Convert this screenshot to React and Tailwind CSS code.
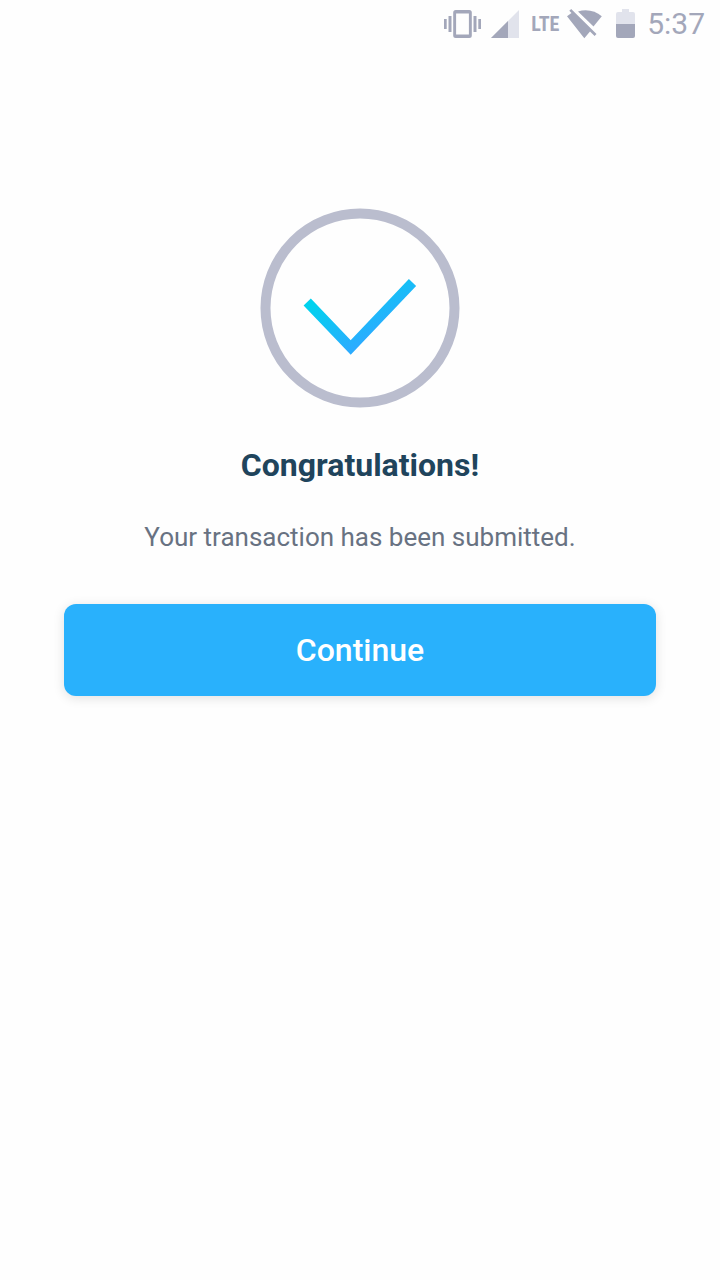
function VibrateIcon() {
  return (
    <svg aria-hidden="true" className="h-7 w-[38px]" viewBox="0 0 38 28" fill="#a3a7ba">
      <path d="M0 9h2.700v10H0zM4.500 6h3v16h-3zM29.500 6h3v16h-3zM34.300 9H37v10h-2.700z" />
      <path
        fillRule="evenodd"
        d="M11.700 0h13.600a2.500 2.500 0 0 1 2.500 2.500v23a2.500 2.500 0 0 1-2.500 2.500H11.700a2.500 2.500 0 0 1-2.500-2.500v-23A2.500 2.500 0 0 1 11.700 0zm.4 3.500v21h12.800v-21z"
      />
    </svg>
  );
}

function SignalIcon() {
  return (
    <svg aria-hidden="true" className="ml-[9px] h-7 w-7" viewBox="0 0 28 28">
      <path d="M28 0v28H0z" fill="#e1e3ec" />
      <path d="M17 11v17H0z" fill="#a3a7ba" />
    </svg>
  );
}

function WifiOffIcon() {
  return (
    <svg aria-hidden="true" className="h-[30px] w-9" viewBox="0 0 36 30" fill="#a3a7ba">
      <path d="M0 7.200 4.500 4 2.300 1.800 4.200 0 29.500 25 27.600 26.900 23 22.400 17.300 29.200z" />
      <path d="M11 2.500C19.500-.3 28.500 1.900 34.800 7.200L26.500 17.500z" />
    </svg>
  );
}

function BatteryIcon() {
  return (
    <svg aria-hidden="true" className="ml-[13px] h-[30px] w-[19px]" viewBox="0 0 19 30">
      <path d="M6 0h7v3h4a2 2 0 0 1 2 2v10H0V5a2 2 0 0 1 2-2h4z" fill="#e1e3ec" />
      <path d="M0 15h19v12a2 2 0 0 1-2 2H2a2 2 0 0 1-2-2z" fill="#a3a7ba" />
    </svg>
  );
}

function SuccessIcon() {
  return (
    <svg aria-hidden="true" className="h-[200px] w-[200px]" viewBox="0 0 200 200" fill="none">
      <defs>
        <linearGradient id="tick" gradientUnits="userSpaceOnUse" x1="50" y1="98" x2="80" y2="148">
          <stop stopColor="#00d2ee" />
          <stop offset="1" stopColor="#2bacff" />
        </linearGradient>
      </defs>
      <circle cx="100" cy="100" r="94.500" stroke="#babdce" strokeWidth="10" />
      <path d="M47.200 94 90.700 139.500 152.500 74.500" stroke="url(#tick)" strokeWidth="10" />
    </svg>
  );
}

export default function App() {
  return (
    <div className="min-h-screen bg-[#fefefe] font-['Roboto',sans-serif]">
      <header className="flex h-12 items-center justify-end pr-[15px] text-[#a3a7ba]">
        <VibrateIcon />
        <SignalIcon />
        <span className="ml-3 w-9 font-['Roboto_Condensed','Liberation_Sans_Narrow',sans-serif] text-xl font-bold">
          LTE
        </span>
        <WifiOffIcon />
        <BatteryIcon />
        <time className="ml-3 text-[30px] leading-none">5:37</time>
      </header>
      <main className="flex flex-col items-center px-16 pt-40">
        <SuccessIcon />
        <h1 className="mt-[37px] text-[32px] leading-10 font-bold text-[#20445c]">Congratulations!</h1>
        <p className="mt-8 text-[26px] leading-10 text-[#687282]">
          Your transaction has been submitted.
        </p>
        <button
          type="button"
          className="mt-[47px] h-[92px] w-full rounded-xl bg-[#29b1fc] text-[32px] font-medium text-white shadow-[0_2px_12px_rgba(0,0,0,0.12)]"
        >
          Continue
        </button>
      </main>
    </div>
  );
}
